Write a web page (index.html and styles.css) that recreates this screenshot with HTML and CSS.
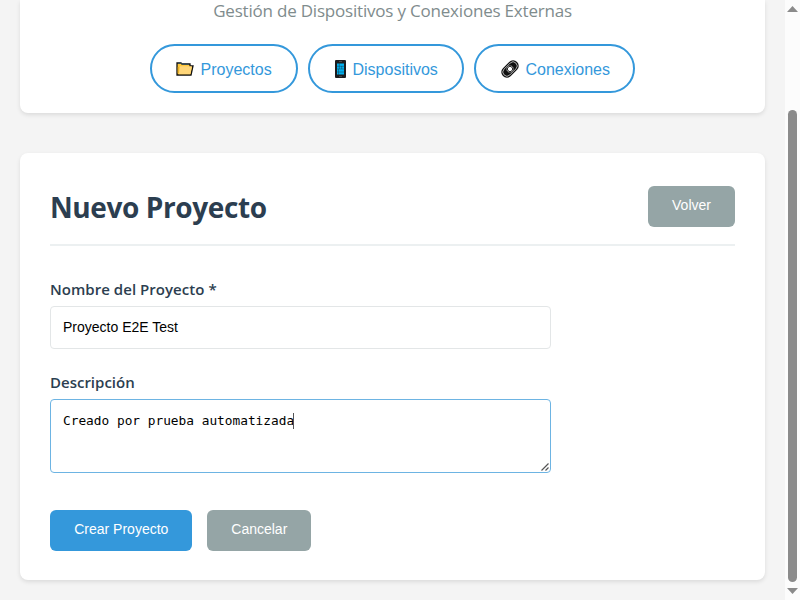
FILE: index.html
```html
<!DOCTYPE html>
<html lang="es">
<head>
<meta charset="utf-8">
<title>Nuevo Proyecto</title>
<link rel="stylesheet" href="styles.css">
</head>
<body>
<div class="page">
  <main class="content">
    <header class="card top">
      <p class="subtitle"><span>Gestión de Dispositivos y Conexiones Externas</span></p>
      <nav class="nav">
        <a class="pill projects">
          <svg width="18" height="14" viewBox="0 0 18 14"><path d="M1 1h4l1 1h8v2h3l-2 9H1z" fill="#ffc83d" stroke="#111" stroke-width="1.3"/><path d="M2 1.2h3l1 1h7" stroke="#35566a" fill="none"/><path d="M4.2 4.2h11.7l-1.6 8H2.7z" fill="#ffd679"/><path d="M2.2 5v6" stroke="#e0a51d"/></svg>
          <span>Proyectos</span>
        </a>
        <a class="pill devices">
          <svg width="11" height="18" viewBox="0 0 11 18"><rect width="11" height="18" rx="1" fill="#1c1c1e"/><path d="M2 3.5h7v11H2z" fill="#00b0f0"/><path d="M2 6.3h7M2 9h7M2 12h7M4.3 3v6M6.7 6v3M3.5 9v6" stroke="#174252" stroke-width=".5"/><path d="M4 1.5h3M4 16.4h3" stroke="#555" stroke-width=".8"/></svg>
          <span>Dispositivos</span>
        </a>
        <a class="pill links">
          <svg width="18" height="18" viewBox="0 0 18 18"><g transform="rotate(-45 9 9)" fill="none"><rect x="-1" y="3.4" width="20" height="11.2" rx="5.6" fill="#111"/><rect x=".6" y="4.9" width="16.8" height="8.2" rx="4.1" stroke="#ccc" stroke-width=".8"/><circle cx="9" cy="9" r="3.6" fill="#fff" stroke="#111" stroke-width=".6"/><circle cx="9" cy="9" r="2.6" fill="#fff" stroke="#222" stroke-width=".9"/></g></svg>
          <span>Conexiones</span>
        </a>
      </nav>
    </header>
    <section class="card panel">
      <div class="heading">
        <h2>Nuevo Proyecto</h2>
        <button class="btn gray back">Volver</button>
      </div>
      <form>
        <label class="name-label" for="nombre">Nombre del Proyecto *</label>
        <input id="nombre" type="text" value="Proyecto E2E Test">
        <label class="desc-label">Descripción</label>
        <div class="area">Creado por prueba automatizada<i class="caret"></i>
          <svg class="grip" width="8" height="8" viewBox="0 0 8 8"><path d="M.5 7.5l7-7M4.5 7.5l3-3" stroke="#555" stroke-width="1.2"/></svg>
        </div>
        <div class="actions">
          <button class="btn blue" type="button">Crear Proyecto</button>
          <button class="btn gray cancel" type="button">Cancelar</button>
        </div>
      </form>
    </section>
  </main>
  <aside class="scrollbar">
    <svg width="11" height="6" viewBox="0 0 11 6"><path d="M5.5 0L11 6H0z" fill="#8b8b8b"/></svg>
    <div class="thumb"></div>
    <svg width="11" height="6" viewBox="0 0 11 6"><path d="M0 0h11L5.5 6z" fill="#8b8b8b"/></svg>
  </aside>
</div>
</body>
</html>
```
FILE: styles.css
```css
* { box-sizing: border-box; }
body { margin: 0; background: #f4f4f4; color: #2c3e50; font-family: "Open Sans", "Noto Sans", sans-serif; overflow: hidden; }
.page { display: flex; height: 600px; }
.content { flex: 1; padding: 0 20px; }
.card { background: #fff; border-radius: 8px; box-shadow: 0 2px 4px rgba(0,0,0,.1); }
.top { height: 113px; border-radius: 0 0 8px 8px; margin-bottom: 40px; }
.subtitle { margin: 0; height: 44px; line-height: 22px; font-size: 17px; letter-spacing: -.2px; text-align: center; color: #7f8c8d; white-space: nowrap; }
.nav { display: flex; justify-content: center; gap: 10px; margin-left: -1px; }
.pill { display: flex; align-items: center; height: 49px; border: 2px solid #3498db; border-radius: 25px; color: #3498db; font: 16px/20px "Liberation Sans", sans-serif; padding-left: 24px; white-space: nowrap; }
.pill svg { flex: none; display: block; }
.pill span { padding-top: 2px; }
.projects { width: 148px; }
.projects span { margin-left: 7px; }
.devices { width: 156px; padding-left: 25px; }
.devices span { margin-left: 7px; }
.links { width: 161px; padding-left: 25px; }
.links span { margin-left: 7px; }
.panel { height: 427px; padding: 32px 30px 0; }
.heading { display: flex; justify-content: space-between; height: 61px; border-bottom: 2px solid #ecf0f1; }
h2 { margin: 0; font-size: 28px; line-height: 44px; letter-spacing: -.4px; white-space: nowrap; }
.btn { display: block; height: 41px; border: 0; border-radius: 6px; padding: 0 0 2px; color: #fff; font: 14px "Liberation Sans", sans-serif; }
.gray { background: #95a5a6; }
.blue { background: #3498db; width: 142px; }
.back { width: 87px; margin-top: .5px; }
.cancel { width: 104px; }
form { padding-top: 32px; }
label { display: block; height: 28px; font-size: 15px; line-height: 23px; font-weight: 600; }
.name-label { letter-spacing: .04px; }
input { display: block; width: 500.5px; height: 43px; border: 1px solid #e3e6e7; border-radius: 4px; padding: 0 12px 1px; font: 14px "Liberation Sans", sans-serif; color: #000; margin-bottom: 22px; }
.area { position: relative; width: 500.5px; height: 74px; border: 1px solid #6db4e3; border-radius: 4px; padding: 12px; font: 12.8px/18px "DejaVu Sans Mono", monospace; color: #000; margin-bottom: 36.5px; white-space: nowrap; }
.caret { display: inline-block; width: 1px; height: 16px; margin-left: -1px; background: #555; vertical-align: -4px; }
.grip { position: absolute; right: 1px; bottom: 1px; }
.actions { display: flex; gap: 15px; padding-left: .3px; }
.scrollbar { width: 15px; background: #fcfcfc; display: flex; flex-direction: column; align-items: center; padding: 6px 0; }
.thumb { width: 9px; height: 472px; margin: 98px 0 6px; border-radius: 5px; background: #8b8b8b; }
```
